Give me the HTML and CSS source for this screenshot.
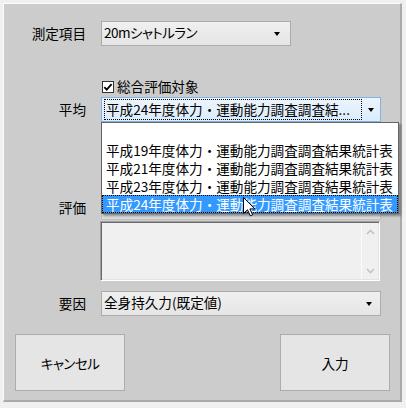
FILE: index.html
```html
<!DOCTYPE html>
<html lang="ja">
<head>
<meta charset="utf-8">
<title>測定項目</title>
<link rel="stylesheet" href="styles.css">
</head>
<body>
<div class="panel">
  <div class="row row-item">
    <div class="label">測定項目</div>
    <div class="combo combo-short"><span class="combo-text kana">20mシャトルラン</span><span class="arrow"></span></div>
  </div>

  <div class="row row-check">
    <div class="label"></div>
    <div class="check">
      <svg class="checkbox" width="12" height="12" viewBox="0 0 12 12">
        <rect x="0.5" y="0.5" width="11" height="11" fill="#fff" stroke="#333"/>
        <path d="M2.3 6.2 L4.7 8.6 L9.6 3.2" fill="none" stroke="#000" stroke-width="1.8"/>
      </svg>
      <span>総合評価対象</span>
    </div>
  </div>

  <div class="row row-avg">
    <div class="label">平均</div>
    <div class="field">
      <div class="combo combo-focus"><span class="focus-rect">平成24年度体力・運動能力調査調査結...</span><span class="arrow"></span></div>
      <ul class="dropdown">
        <li class="opt"></li>
        <li class="opt">平成19年度体力・運動能力調査調査結果統計表</li>
        <li class="opt">平成21年度体力・運動能力調査調査結果統計表</li>
        <li class="opt">平成23年度体力・運動能力調査調査結果統計表</li>
        <li class="opt opt-selected">平成24年度体力・運動能力調査調査結果統計表</li>
      </ul>
      <svg class="cursor" width="13" height="20" viewBox="0 0 13 20">
        <path d="M0.5 0.5 L0.5 16.5 L4.5 12.8 L7.3 18.8 L9.6 17.8 L6.9 11.9 L11.8 11.9 Z" fill="#fff" stroke="#000" stroke-width="1"/>
      </svg>
    </div>
  </div>

  <div class="row row-eval">
    <div class="label">評価</div>
    <div class="combo combo-disabled"></div>
  </div>

  <div class="row row-text">
    <div class="label"></div>
    <div class="memo">
      <div class="scrollbar">
        <div class="sb-btn">
          <svg width="9" height="6" viewBox="0 0 9 6"><path d="M1 5 L4.5 1.5 L8 5" fill="none" stroke="#c3c3c3" stroke-width="1.6"/></svg>
        </div>
        <div class="sb-btn">
          <svg width="9" height="6" viewBox="0 0 9 6"><path d="M1 1 L4.5 4.5 L8 1" fill="none" stroke="#c3c3c3" stroke-width="1.6"/></svg>
        </div>
      </div>
    </div>
  </div>

  <div class="row row-factor">
    <div class="label">要因</div>
    <div class="combo"><span class="combo-text">全身持久力(既定値)</span><span class="arrow"></span></div>
  </div>

  <div class="buttons">
    <button class="btn kana">キャンセル</button>
    <button class="btn">入力</button>
  </div>
</div>
</body>
</html>
```
FILE: styles.css
```css
* {
  box-sizing: border-box;
}

html, body {
  margin: 0;
  padding: 0;
  background: #f0f0f0;
}

body {
  font-family: "Noto Sans CJK JP", "Noto Sans", sans-serif;
  font-size: 13.6px;
  color: #000;
  line-height: 1;
}

.panel {
  margin: 3px 0 0 3px;
  width: 399px;
  height: 399px;
  background: #cccccc;
  border-top: 1px solid #fdfdfd;
  border-left: 1px solid #fdfdfd;
  border-right: 2px solid #a9a9a9;
  border-bottom: 2px solid #a9a9a9;
  display: flex;
  flex-direction: column;
}

.row {
  display: grid;
  grid-template-columns: 82px 280px;
  column-gap: 15px;
  align-items: center;
}

.label {
  text-align: right;
  white-space: nowrap;
}

.row-item { margin-top: 17px; height: 25px; }
.row-check { margin-top: 33px; height: 16px; }
.row-avg { margin-top: 2px; height: 25px; position: relative; z-index: 2; }
.row-eval { margin-top: 73px; height: 25px; }
.row-text { margin-top: 1px; height: 60px; }
.row-factor { margin-top: 10px; height: 25px; }

.kana {
  font-feature-settings: "palt";
  letter-spacing: -0.6px;
}

.combo {
  height: 25px;
  width: 280px;
  border: 1px solid #acacac;
  background: linear-gradient(#f0f0f0, #e5e5e5);
  display: flex;
  align-items: center;
  position: relative;
}

.combo-short {
  width: 190px;
}

.combo-text {
  flex: 1;
  padding-left: 2px;
  white-space: nowrap;
  padding-bottom: 1px;
}

.arrow {
  width: 20px;
  height: 100%;
  flex: none;
  position: relative;
}

.arrow::after {
  content: "";
  position: absolute;
  left: 6px;
  top: 10px;
  border-left: 3.5px solid transparent;
  border-right: 3.5px solid transparent;
  border-top: 4px solid #000;
}

.combo-short .arrow {
  width: 12px;
  margin-right: 4px;
}

.combo-short .arrow::after {
  left: 0;
}

.combo-focus {
  border-color: #7eb4ea;
  background: linear-gradient(#ecf4fc, #dcecfc);
}

.focus-rect {
  margin-left: 2px;
  height: 21px;
  flex: 1;
  border: 1px dotted #000;
  padding-left: 1px;
  display: flex;
  align-items: center;
  white-space: nowrap;
  overflow: hidden;
}

.combo-focus .arrow {
  width: 18px;
}

.combo-focus .arrow::after {
  left: 6px;
}

.combo-disabled {
  background: #dcdcdc;
  border-color: #bfbfbf;
}

.field {
  position: relative;
  height: 25px;
}

.dropdown {
  position: absolute;
  left: 0;
  top: 25px;
  width: 298px;
  margin: 0;
  padding: 0;
  list-style: none;
  background: #fff;
  border: 1px solid #646464;
  box-shadow: 2px 2px 2px rgba(0, 0, 0, 0.35);
}

.opt {
  height: 18px;
  line-height: 18px;
  padding-left: 4px;
  white-space: nowrap;
  overflow: hidden;
}

.opt-selected {
  background: #3399ff;
  color: #fff;
  outline: 1px dotted #000;
  outline-offset: -1px;
}

.cursor {
  position: absolute;
  left: 142px;
  top: 100px;
  z-index: 3;
}

.check {
  display: flex;
  align-items: center;
  gap: 3px;
  margin-left: 1px;
  white-space: nowrap;
}

.checkbox {
  flex: none;
}

.memo {
  width: 280px;
  height: 60px;
  margin-left: -1px;
  background: #f0f0f0;
  border: 1px solid;
  border-color: #a0a0a0 #ffffff #ffffff #a0a0a0;
  box-shadow: inset 1px 1px 0 #696969, inset -1px -1px 0 #e3e3e3;
  display: flex;
  justify-content: flex-end;
  padding: 1px;
}

.scrollbar {
  width: 17px;
  height: 100%;
  border-left: 1px solid #fafafa;
  display: flex;
  flex-direction: column;
  justify-content: space-between;
}

.sb-btn {
  height: 17px;
  display: flex;
  align-items: center;
  justify-content: center;
}

.buttons {
  margin-top: 18px;
  display: flex;
  justify-content: space-between;
  padding: 0 10px 0 11px;
}

.btn {
  width: 110px;
  height: 57px;
  background: #e5e5e5;
  border: 1px solid #acacac;
  font-family: "Noto Sans CJK JP", "Noto Sans", sans-serif;
  font-size: 13.6px;
  color: #000;
  padding: 0;
}
```
